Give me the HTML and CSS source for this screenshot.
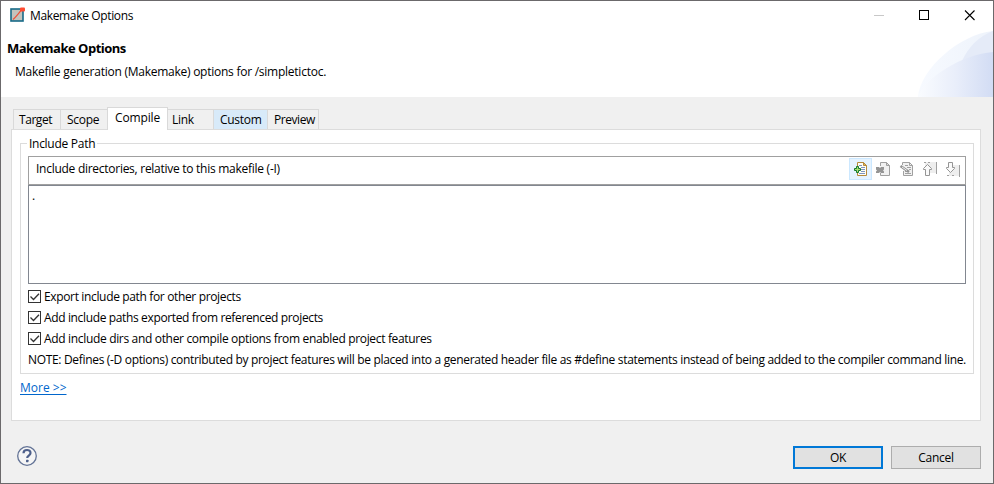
FILE: index.html
```html
<!DOCTYPE html>
<html lang="en">
<head>
<meta charset="utf-8">
<title>Makemake Options</title>
<link rel="stylesheet" href="styles.css">
</head>
<body>
<div class="dialog">
  <div class="titlebar">
    <svg class="app-icon" width="16" height="16" viewBox="0 0 16 16"><rect x="2" y="3" width="12" height="12" fill="#c3c3bd" stroke="#176a87" stroke-width="1.600"/><path d="M4 13.500C7 11 9 8 12.500 4" fill="none" stroke="#ee5138" stroke-width="1.200"/><rect x="11" y="1.500" width="5" height="4" rx="1" fill="#ff4a30"/></svg>
    <span class="caption">Makemake Options</span>
    <svg class="controls" width="126" height="29" viewBox="0 0 126 29" fill="none" shape-rendering="crispEdges"><path d="M7 14.500h10" stroke="#c8c8c8"/><rect x="52.500" y="9.500" width="9" height="9" stroke="#000"/><path d="M98 9.500l9.500 9.500M107.500 9.500L98 19" stroke="#000" stroke-width="1.100" shape-rendering="auto"/></svg>
  </div>
  <header class="header">
    <h1>Makemake Options</h1>
    <p>Makefile generation (Makemake) options for /simpletictoc.</p>
    <svg class="banner" width="75" height="66" viewBox="0 0 75 66"><defs><linearGradient id="wash"><stop offset="0" stop-color="#fafcff"/><stop offset=".5" stop-color="#e9eefa"/><stop offset="1" stop-color="#d2dcf4"/></linearGradient><linearGradient id="haze"><stop offset="0" stop-color="#f7faff"/><stop offset="1" stop-color="#eef3fb"/></linearGradient></defs><path d="M0 66C2 38 42 3 75 0V66Z" fill="url(#haze)"/><path d="M44 30Q54 8 75 0V26Z" fill="#e5ebf8"/><path d="M0 66C6 47 45 23 75 21V66Z" fill="url(#wash)"/></svg>
  </header>
  <main class="content">
    <nav class="tabs">
      <span class="tab target">Target</span><span class="tab scope">Scope</span><span class="tab compile">Compile</span><span class="tab link">Link</span><span class="tab custom">Custom</span><span class="tab preview">Preview</span>
    </nav>
    <section class="panel">
      <div class="group">
        <div class="legend"><span>Include Path</span></div>
        <div class="toolbar">
          <span class="toolbar-label">Include directories, relative to this makefile (-I)</span>
          <span class="tool active"><svg width="16" height="16" viewBox="0 0 16 16"><path d="M4.500 1.500h6l3 3v10h-9z" fill="#fffdf4" stroke="#b58a3c"/><path d="M10.500 1.500v3h3z" fill="#e2b85c" stroke="#b58a3c"/><path d="M6 4.500h3M8 6.500h4M8 8.500h4M8 10.500h4M6 12.500h6" stroke="#7d95c0"/><path d="M3.500 5.500h2v2h2v2h-2v2h-2v-2h-2v-2h2z" fill="#a5df70" stroke="#16792c"/></svg></span>
          <span class="tool"><svg width="16" height="16" viewBox="0 0 16 16"><path d="M4.500 5V1.500h6l3 3v10h-9V12" fill="#f1f1f1" stroke="#a0a0a0"/><path d="M10.500 1.500v3h3z" fill="#ddd" stroke="#a0a0a0"/><path d="M0 6h3l1 1 1-1h3v2.500L7 9.500l1 1V12H5l-1-1-1 1H0v-1.500l1-1-1-1z" fill="#959595"/></svg></span>
          <span class="tool"><svg width="16" height="16" viewBox="0 0 16 16"><path d="M3.500 4V1.500h7l3 3v10h-9V10" fill="#f1f1f1" stroke="#a0a0a0"/><path d="M10.500 1.500v3h3M6 4.500h3M8 6.500h4M10 8.500h2M6 12.500h6M6 10.500h2" fill="none" stroke="#a0a0a0"/><path d="M1.500 5l8.500 6" stroke="#929292" stroke-width="2.600"/><path d="M3 6l5 3.500" stroke="#eee"/></svg></span>
          <span class="tool"><svg width="16" height="16" viewBox="0 0 16 16"><path d="M3 1h11v11H3z" fill="#eee"/><path d="M2 1.500h2M6 1.500h2M14.500 1v12" stroke="#a0a0a0"/><path d="M5.500 3.500L1.500 7.500v1h2v6h4v-6h2v-1z" fill="#fafafa" stroke="#959595"/></svg></span>
          <span class="tool"><svg width="16" height="16" viewBox="0 0 16 16"><path d="M4 4h11v11H4z" fill="#eee"/><path d="M2 14.500h2M7 14.500h2M14.500 4v12" stroke="#a0a0a0"/><path d="M3.500 1.500h4v5h2v1l-4 4-4-4v-1h2z" fill="#fafafa" stroke="#959595"/></svg></span>
        </div>
        <div class="list"><span>.</span></div>
        <div class="check"><svg width="13" height="13" viewBox="0 0 13 13"><rect x=".5" y=".5" width="12" height="12" fill="#fff" stroke="#333"/><path d="M2.500 6.500l3 3L11 3.700" fill="none" stroke="#333" stroke-width="1.300"/></svg><span class="c1">Export include path for other projects</span></div>
        <div class="check"><svg width="13" height="13" viewBox="0 0 13 13"><rect x=".5" y=".5" width="12" height="12" fill="#fff" stroke="#333"/><path d="M2.500 6.500l3 3L11 3.700" fill="none" stroke="#333" stroke-width="1.300"/></svg><span class="c2">Add include paths exported from referenced projects</span></div>
        <div class="check"><svg width="13" height="13" viewBox="0 0 13 13"><rect x=".5" y=".5" width="12" height="12" fill="#fff" stroke="#333"/><path d="M2.500 6.500l3 3L11 3.700" fill="none" stroke="#333" stroke-width="1.300"/></svg><span class="c3">Add include dirs and other compile options from enabled project features</span></div>
        <p class="note">NOTE: Defines (-D options) contributed by project features will be placed into a generated header file as #define statements instead of being added to the compiler command line.</p>
      </div>
      <a class="more">More &gt;&gt;</a>
    </section>
  </main>
  <footer class="footer">
    <svg class="help" width="22" height="22" viewBox="0 0 22 22"><circle cx="11" cy="11" r="9.300" fill="#f5f5f5" stroke="#637396" stroke-width="1.300"/><path d="M7.500 8.200C7.500 3.900 14.500 4 14.500 8c0 2.500-3.300 2.600-3.300 5" fill="none" stroke="#4e608b" stroke-width="2.200"/><rect x="10" y="14.700" width="2.500" height="2.500" rx=".6" fill="#4e608b"/></svg>
    <button class="ok">OK</button>
    <button>Cancel</button>
  </footer>
</div>
</body>
</html>
```

FILE: styles.css
```css
* { box-sizing: border-box; }
body { margin: 0; font-family: "Open Sans", sans-serif; font-size: 12px; line-height: 16px; color: #000; letter-spacing: -0.3px; }
h1, p { margin: 0; }
svg { display: block; flex: none; }
.dialog { width: 994px; height: 484px; border: 1px solid #6b696b; background: #f0f0f0; display: flex; flex-direction: column; overflow: hidden; white-space: nowrap; }
.titlebar { height: 29px; flex: none; background: #fff; display: flex; align-items: center; padding-left: 8px; }
.app-icon { margin-top: -3px; }
.caption { margin-left: 5px; letter-spacing: -0.35px; }
.controls { margin-left: auto; }
.header { height: 67px; flex: none; background: #fff; padding: 10px 0 0 6px; position: relative; }
.header h1 { font-size: 13px; line-height: 16px; font-weight: 700; letter-spacing: -0.5px; }
.header p { padding: 8px 0 0 8px; letter-spacing: -0.25px; }
.banner { position: absolute; right: 0; bottom: 0; }
.content { padding: 10px 12px 0 10px; }
.tabs { height: 22px; display: flex; align-items: flex-end; padding-left: 2px; }
.tab { height: 20px; border: 1px solid #d9d9d9; border-width: 1px 0 0 1px; padding: 2px 0 0 5px; }
.target { width: 47px; letter-spacing: -0.45px; }
.scope { width: 47px; padding-left: 6px; }
.compile { width: 61px; height: 23px; margin-bottom: -1px; border-right-width: 1px; background: #fff; padding-left: 7px; z-index: 1; letter-spacing: -0.15px; }
.link { width: 45px; border-left: 0; padding-left: 4px; }
.custom { width: 54px; background: #d8eaf9; padding-left: 6px; }
.preview { width: 52px; border-right-width: 1px; padding-left: 6px; letter-spacing: -0.45px; }
.panel { height: 292px; border: 1px solid #dcdcdc; background: #fff; padding: 13px 6px 0 8px; }
.group { height: 231px; border: 1px solid #dcdcdc; padding: 0 7px; }
.legend { margin-top: -8px; height: 20px; }
.legend span { background: #fff; padding: 0 2px; margin-left: -1px; letter-spacing: -0.28px; }
.toolbar { height: 29px; border: 1px solid #a0a0a0; display: flex; align-items: center; padding-right: 1px; }
.toolbar-label { margin: -4px auto 0 7px; letter-spacing: -0.27px; }
.tool { width: 23px; height: 22px; margin-top: -3px; display: grid; place-items: center; }
.active { background: #e5f3ff; border: 1px solid #cce8ff; }
.list { height: 99px; border: 1px solid #828790; padding: 2px 3px; }
.check { height: 21px; display: flex; align-items: center; gap: 3px; }
.list + .check { margin-top: 2px; }
.c1 { letter-spacing: -0.35px; }
.c2 { letter-spacing: -0.36px; }
.c3 { letter-spacing: -0.33px; }
.note { margin-top: 3px; letter-spacing: -0.325px; }
.more { display: inline-block; margin-top: 6px; color: #0066cc; text-decoration: underline; text-underline-offset: 2px; letter-spacing: 0; }
.footer { display: flex; gap: 8px; padding: 25px 12px 0 15px; }
.help { margin-right: auto; margin-top: -1px; }
button { width: 90px; height: 23px; border: 1px solid #adadad; background: #e1e1e1; padding: 0; font: inherit; letter-spacing: inherit; color: #000; }
.ok { border: 2px solid #0078d7; }
```
